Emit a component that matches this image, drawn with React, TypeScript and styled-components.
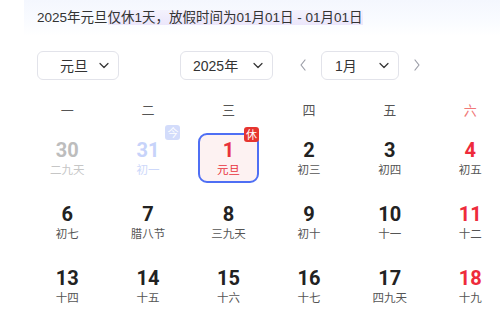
import styled, { createGlobalStyle } from "styled-components";

const GlobalStyle = createGlobalStyle`
  html, body {
    margin: 0;
    padding: 0;
    background: #ffffff;
    overflow: hidden;
  }
  body {
    font-family: "Liberation Sans", "Noto Sans CJK SC", sans-serif;
    color: #333333;
  }
`;

const Page = styled.div`
  width: 500px;
  padding-left: 27px;
  box-sizing: border-box;
`;

const Banner = styled.div`
  margin-left: -3px;
  height: 36px;
  padding: 9px 0 0 13px;
  box-sizing: border-box;
  background: linear-gradient(180deg, #f4f7fe 0%, #f9fbff 55%, #ffffff 100%);
  font-size: 13.5px;
  line-height: 17px;
  color: #333333;
  white-space: nowrap;
`;

const Mark = styled.span`
  background: linear-gradient(180deg, #f4f2fd 0%, #ebe6fb 100%);
`;

const Toolbar = styled.div`
  display: flex;
  align-items: center;
  padding: 14px 0 0 10px;
  height: 30px;
`;

const Select = styled.div<{ $w: number; $pl: number; $ml?: number }>`
  display: flex;
  align-items: center;
  justify-content: space-between;
  box-sizing: border-box;
  width: ${(p) => p.$w}px;
  height: 29px;
  margin-left: ${(p) => p.$ml ?? 0}px;
  padding: 0 9px 0 ${(p) => p.$pl}px;
  border: 1px solid #e2e3ea;
  border-radius: 6px;
  font-size: 14px;
  color: #333333;
`;

const Arrow = styled.span<{ $ml: number }>`
  display: flex;
  align-items: center;
  margin-left: ${(p) => p.$ml}px;
  color: #9a9ca6;
`;

const Grid = styled.div`
  display: grid;
  grid-template-columns: repeat(6, 80.6px);
  row-gap: 14px;
  margin-top: 15px;
`;

const Week = styled.div<{ $red?: boolean }>`
  height: 28px;
  display: flex;
  align-items: center;
  justify-content: center;
  font-family: "Noto Sans CJK SC", sans-serif;
  font-size: 13px;
  color: ${(p) => (p.$red ? "#f07878" : "#555555")};
  margin-bottom: -4px;
`;

const Cell = styled.div<{ $active?: boolean }>`
  position: relative;
  justify-self: center;
  width: 61px;
  height: 50px;
  box-sizing: border-box;
  display: flex;
  flex-direction: column;
  align-items: center;
  padding-top: ${(p) => (p.$active ? 4 : 6)}px;
  border-radius: 9px;
  border: ${(p) => (p.$active ? "2px solid #4f6ff4" : "none")};
  background: ${(p) => (p.$active ? "#fdf2f2" : "transparent")};
`;

const Num = styled.div<{ $c: string }>`
  font-family: Roboto, "Liberation Sans", sans-serif;
  font-weight: 700;
  font-size: 20px;
  line-height: 22px;
  color: ${(p) => p.$c};
`;

const Lunar = styled.div<{ $c: string }>`
  font-family: "Noto Sans CJK SC", sans-serif;
  font-size: 11.5px;
  line-height: 16px;
  color: ${(p) => p.$c};
`;

const Badge = styled.span<{ $bg: string }>`
  position: absolute;
  top: -8px;
  right: -2px;
  width: 15px;
  height: 15px;
  border-radius: 3px;
  background: ${(p) => p.$bg};
  color: #ffffff;
  font-family: "Noto Sans CJK SC", sans-serif;
  font-size: 11px;
  line-height: 15px;
  text-align: center;
`;

const Chevron = ({ dir }: { dir: "down" | "left" | "right" }) => {
  const d =
    dir === "down" ? "M1 1.5 L5 5.5 L9 1.5" : dir === "left" ? "M5 1 L1 6 L5 11" : "M1 1 L5 6 L1 11";
  const w = dir === "down" ? 10 : 6;
  const h = dir === "down" ? 7 : 12;
  return (
    <svg width={w} height={h} viewBox={`0 0 ${w} ${h}`} fill="none">
      <path d={d} stroke="currentColor" strokeWidth="1.2" strokeLinecap="round" strokeLinejoin="round" />
    </svg>
  );
};

type Day = {
  n: string;
  l: string;
  nc: string;
  lc: string;
  active?: boolean;
  badge?: { t: string; bg: string };
};

const DARK = "#222222";
const SUB = "#555555";
const RED = "#ee2b3b";

// Monday..Saturday of the first three weeks (Sunday column lies off-screen)
const days: Day[] = [
  { n: "30", l: "二九天", nc: "#bdbdbd", lc: "#c6c6c6" },
  { n: "31", l: "初一", nc: "#c7d3fa", lc: "#cdd8fa", badge: { t: "今", bg: "#d3dcfb" } },
  { n: "1", l: "元旦", nc: "#e8323c", lc: "#e8323c", active: true, badge: { t: "休", bg: "#e6352f" } },
  { n: "2", l: "初三", nc: DARK, lc: SUB },
  { n: "3", l: "初四", nc: DARK, lc: SUB },
  { n: "4", l: "初五", nc: RED, lc: SUB },
  { n: "6", l: "初七", nc: DARK, lc: SUB },
  { n: "7", l: "腊八节", nc: DARK, lc: SUB },
  { n: "8", l: "三九天", nc: DARK, lc: SUB },
  { n: "9", l: "初十", nc: DARK, lc: SUB },
  { n: "10", l: "十一", nc: DARK, lc: SUB },
  { n: "11", l: "十二", nc: RED, lc: SUB },
  { n: "13", l: "十四", nc: DARK, lc: SUB },
  { n: "14", l: "十五", nc: DARK, lc: SUB },
  { n: "15", l: "十六", nc: DARK, lc: SUB },
  { n: "16", l: "十七", nc: DARK, lc: SUB },
  { n: "17", l: "四九天", nc: DARK, lc: SUB },
  { n: "18", l: "十九", nc: RED, lc: SUB },
];

const weekdays = ["一", "二", "三", "四", "五", "六"];

const App = () => {
  return (
    <>
      <GlobalStyle />
      <Page>
        <Banner>
          2025年元旦<Mark>仅休1天，放假时间为01月01日 - 01月01日</Mark>
        </Banner>
        <Toolbar>
          <Select $w={82} $pl={22}>
            元旦
            <Chevron dir="down" />
          </Select>
          <Select $w={93} $pl={12} $ml={61}>
            2025年
            <Chevron dir="down" />
          </Select>
          <Arrow $ml={27}>
            <Chevron dir="left" />
          </Arrow>
          <Select $w={78} $pl={13} $ml={15}>
            1月
            <Chevron dir="down" />
          </Select>
          <Arrow $ml={15}>
            <Chevron dir="right" />
          </Arrow>
        </Toolbar>
        <Grid>
          {weekdays.map((w, i) => (
            <Week key={w} $red={i === 5}>
              {w}
            </Week>
          ))}
          {days.map((d) => (
            <Cell key={d.n} $active={d.active}>
              <Num $c={d.nc}>{d.n}</Num>
              <Lunar $c={d.lc}>{d.l}</Lunar>
              {d.badge && <Badge $bg={d.badge.bg}>{d.badge.t}</Badge>}
            </Cell>
          ))}
        </Grid>
      </Page>
    </>
  );
};

export default App;
